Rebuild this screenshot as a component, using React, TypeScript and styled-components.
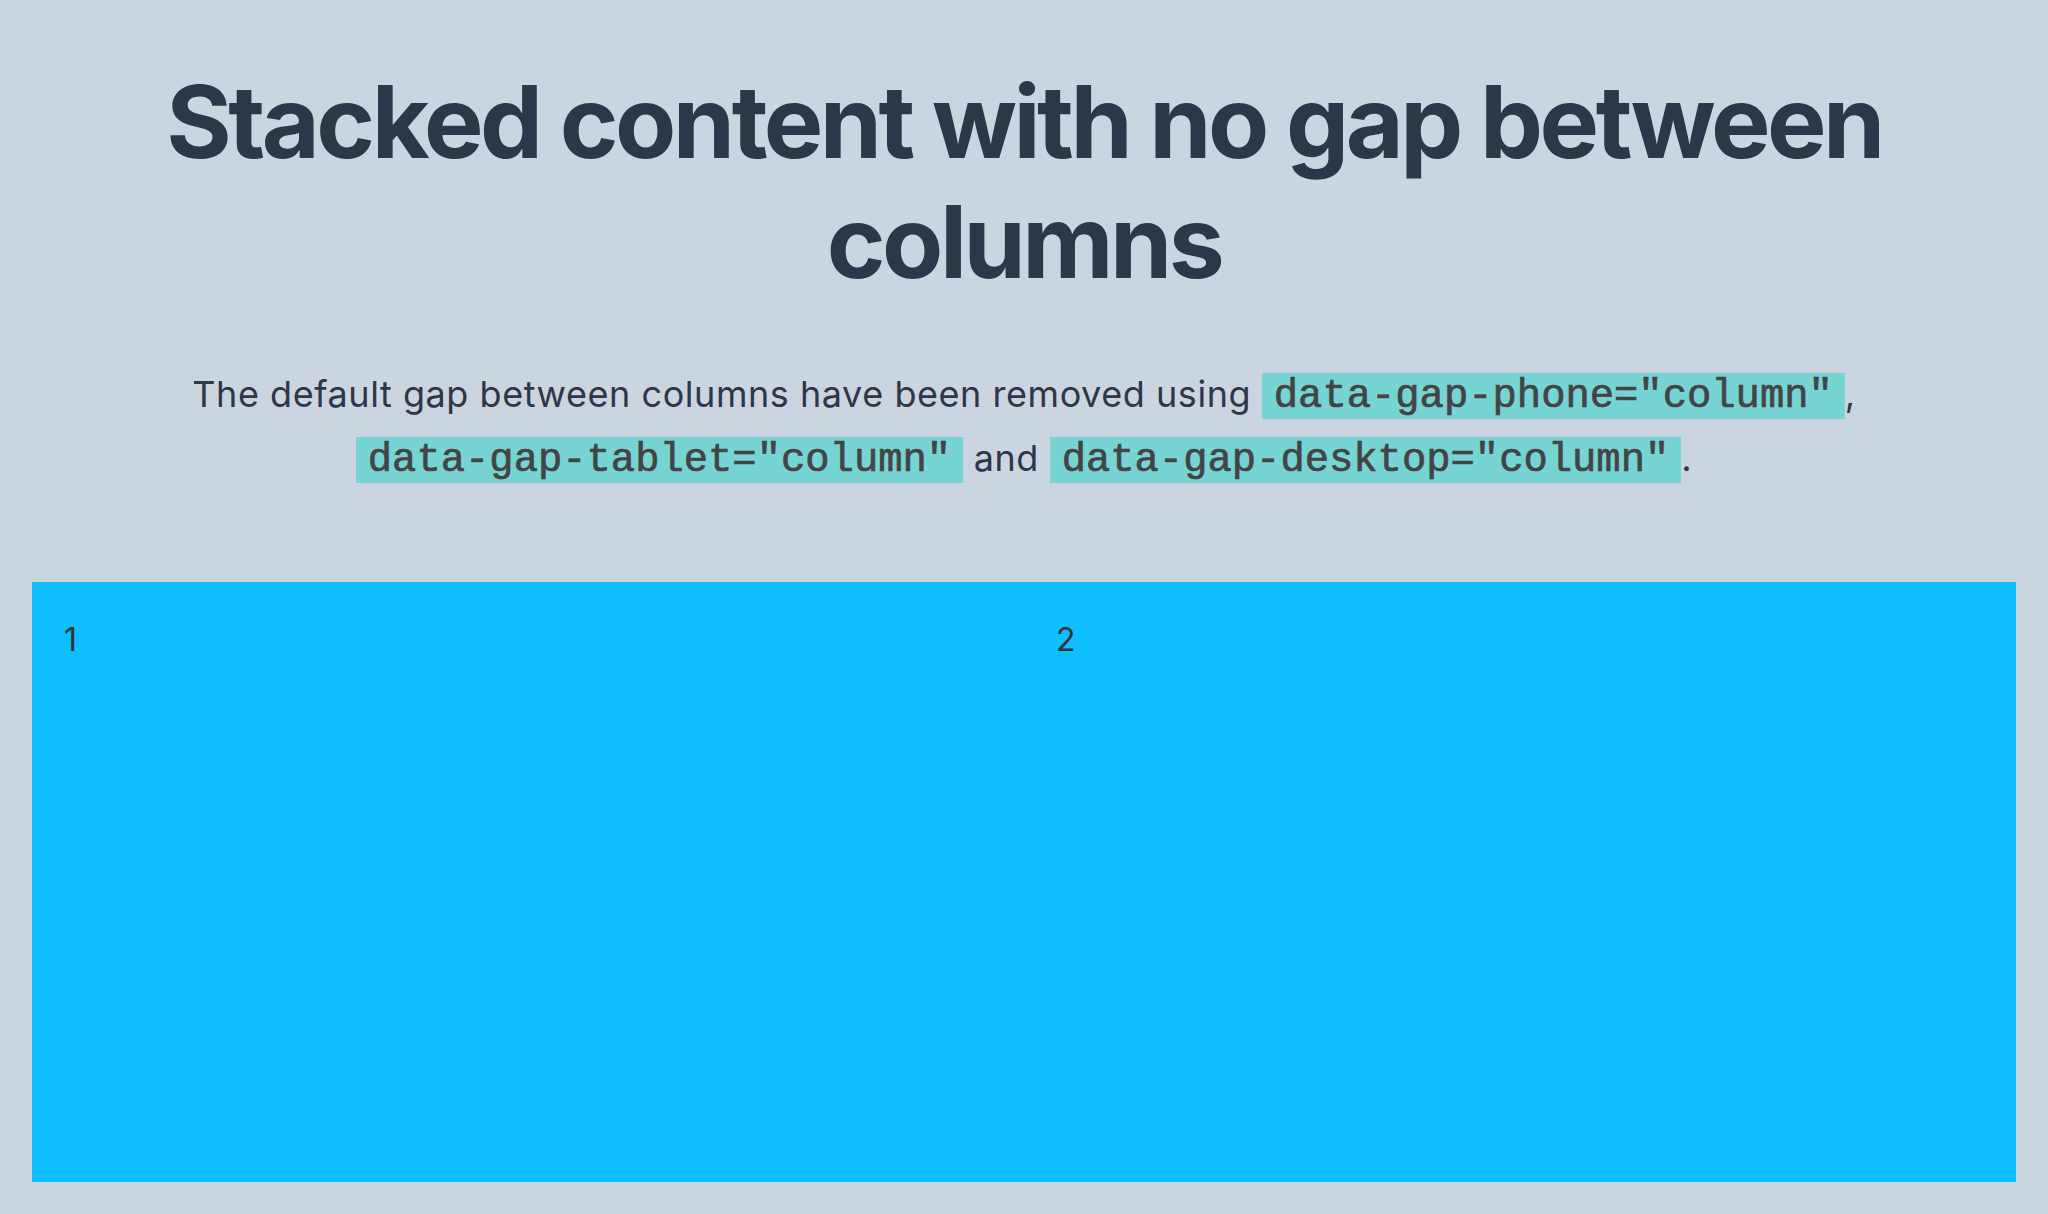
import React from "react";
import styled, { createGlobalStyle } from "styled-components";

const Global = createGlobalStyle`
  html, body {
    margin: 0;
    padding: 0;
    background: #cbd5e0;
  }
  body {
    font-family: Inter, "Noto Sans", sans-serif;
    color: #2d3748;
  }
`;

const Page = styled.main`
  padding: 62px 32px 32px;
  display: flex;
  flex-direction: column;
  align-items: stretch;
`;

const Header = styled.header`
  text-align: center;
`;

const Title = styled.h1`
  margin: 0;
  font-size: 100px;
  line-height: 120px;
  font-weight: 700;
  letter-spacing: -3.5px;
  color: #2d3748;
`;

const Lead = styled.p`
  margin: 60px 0 0;
  font-size: 36px;
  line-height: 64px;
  letter-spacing: 0.55px;
  color: #2d3748;
`;

const Code = styled.code`
  font-family: "Liberation Mono", "Courier New", monospace;
  font-weight: 400;
  font-size: 40.5px;
  line-height: 1;
  letter-spacing: 0;
  white-space: nowrap;
  color: #444444;
  -webkit-text-stroke: 0.7px #444444;
  background: #76d5d2;
  padding: 0 12px;
`;

const Grid = styled.section`
  margin-top: 92px;
  display: grid;
  grid-template-columns: 1fr 1fr;
  height: 600px;
  background: #0ebeff;
`;

const Cell = styled.div`
  padding: 38px 32px;
  font-size: 32px;
  line-height: 40px;
  color: #333333;
`;

export default function App() {
  return (
    <>
      <Global />
      <Page>
        <Header>
          <Title>Stacked content with no gap between columns</Title>
          <Lead>
            The default gap between columns have been removed using{" "}
            <Code>data-gap-phone="column"</Code>, <Code>data-gap-tablet="column"</Code> and{" "}
            <Code>data-gap-desktop="column"</Code>.
          </Lead>
        </Header>
        <Grid>
          <Cell>1</Cell>
          <Cell>2</Cell>
        </Grid>
      </Page>
    </>
  );
}
